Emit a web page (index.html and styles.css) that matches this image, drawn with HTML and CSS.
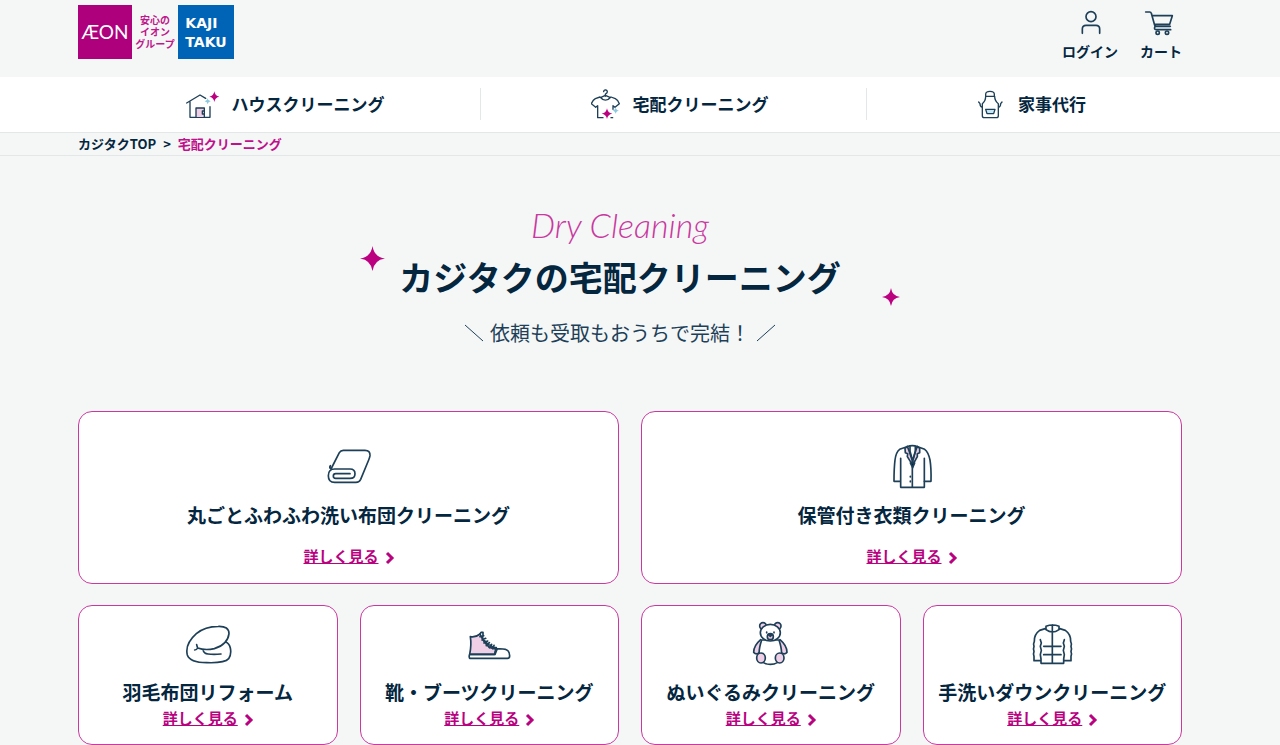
FILE: index.html
```
<!DOCTYPE html>
<html lang="ja">
  <head>
    <meta charset="utf-8">
    <title>宅配クリーニング | カジタク</title>
    <meta name="viewport" content="initial-scale=1, width=device-width">
    <link rel="stylesheet" href="styles.css">
  </head>
  <body>
    <header class="header wrap">
      <a class="logo" href="#">
        <span class="logo-aeon">ÆON</span>
        <span class="logo-group">安心の<br>イオン<br>グループ</span>
        <span class="logo-kajitaku">KAJI<br>TAKU</span>
      </a>
      <div class="tools">
        <a class="tool" href="#">
          <svg class="line" viewBox="0 0 84 84" aria-hidden="true">
            <circle cx="45" cy="23" r="15" />
            <path d="M19 73V60q0-11 11-11h30q11 0 11 11v13" />
          </svg>
          ログイン
        </a>
        <a class="tool" href="#">
          <svg class="line" viewBox="0 0 84 84" aria-hidden="true">
            <path d="M-4 9h12q4 0 5 4l10 36q1 3 5 3h42M16 20h60l-8 26H24M24 52q-4 10 3 10h44" />
            <circle cx="32" cy="71" r="5" />
            <circle cx="60" cy="71" r="5" />
          </svg>
          カート
        </a>
      </div>
    </header>

    <nav class="nav">
      <div class="nav-inner wrap">
        <a class="nav-item" href="#">
          <svg class="nav-icon nav-icon-house" viewBox="42 24 102 96" aria-hidden="true">
            <path d="M44 69l40-24 17 10M54 66v46h60V80" />
            <path class="pink" d="M72 111V84h25v27M97 93h-6v9h6" />
            <path class="blue" d="M107 55q1 8 9 9q-8 1-9 9q-1-8-9-9q8-1 9-9z" />
            <path class="star" d="M127 34q2 14 15 16q-13 2-15 16q-2-14-15-16q13-2 15-16z" />
          </svg>
          ハウスクリーニング
        </a>
        <a class="nav-item" href="#">
          <svg class="nav-icon nav-icon-shirt" viewBox="30 24 90 96" aria-hidden="true">
            <path d="M68 35q1-6 6-5q7 2 4 8l-5 5v6M60 52l13-6 14 6M57 51q16 19 33 0l13 5q8 4 12 15l-13 11-6-5v11M57 51l-14 5q-7 4-12 15l13 11 6-5v36h16M90 113h5" />
            <path class="blue" d="M104 82q1 9 10 10q-9 1-10 10q-1-9-10-10q9-1 10-10z" />
            <path class="star" d="M78 85q2 14 16 16q-14 2-16 16q-2-14-16-16q14-2 16-16z" />
          </svg>
          宅配クリーニング
        </a>
        <a class="nav-item" href="#">
          <svg class="nav-icon nav-icon-apron" viewBox="54 24 84 96" aria-hidden="true">
            <path d="M77 49h27M77 49V43q0-9 13-9t13 9v6M77 49q0 14-10 22v36q0 6 6 6h36q6 0 6-6V71q-11-8-11-22M67 82q-7-2-7-11l-4-5M115 82q7-2 7-11l4-5M67 72v11M115 72v11" />
            <path class="sky" d="M77 88h28l-4 13H81z" />
          </svg>
          家事代行
        </a>
      </div>
    </nav>

    <div class="breadcrumb">
      <div class="breadcrumb-inner wrap">
        <a href="#">カジタクTOP</a>
        <span>&gt;</span>
        <span class="current">宅配クリーニング</span>
      </div>
    </div>

    <main class="wrap">
      <div class="hero">
        <p class="hero-en">Dry Cleaning</p>
        <h1 class="hero-title">カジタクの宅配クリーニング</h1>
        <p class="hero-sub">
          <svg viewBox="0 0 18 18" aria-hidden="true"><path d="M0 1l18 16" /></svg>
          依頼も受取もおうちで完結！
          <svg viewBox="0 0 18 18" aria-hidden="true"><path d="M0 17L18 1" /></svg>
        </p>
        <svg class="sparkle sparkle-left" viewBox="0 0 24 24" aria-hidden="true"><path d="M12 0q1.500 10.500 12 12q-10.500 1.500-12 12q-1.500-10.500-12-12q10.500-1.500 12-12z" /></svg>
        <svg class="sparkle sparkle-right" viewBox="0 0 24 24" aria-hidden="true"><path d="M12 0q1.500 10.500 12 12q-10.500 1.500-12 12q-1.500-10.500-12-12q10.500-1.500 12-12z" /></svg>
      </div>

      <div class="cards">
        <section class="card card-large">
          <svg class="card-icon" viewBox="15 24 144 144" aria-hidden="true">
            <path d="M33 102L58 53q4-7 12-7h65q16 0 15 16q-1 6-4 13l-24 58q-4 9-14 9H44q-19 0-19-20t19-20h46q15 0 15 14t-15 14H47q-7 0-7-7t7-7h43M33 102q-6-4-2-10" />
          </svg>
          <h2>丸ごとふわふわ洗い布団クリーニング</h2>
          <a class="more" href="#"><span>詳しく見る</span><svg viewBox="0 0 8 12" aria-hidden="true"><path d="M1 1l5 5-5 5" /></svg></a>
        </section>
        <section class="card card-large">
          <svg class="card-icon" viewBox="22 24 144 144" aria-hidden="true">
            <path d="M79 35q16-6 32 0l21 8q11 8 16 32 4 25 3 64h-21M79 35l-22 8q-11 8-14 32-3 25-3 64h20M60 70v87h71V70M95 96v61" />
            <path class="pink" d="M80 34l-7 6 1 13 7 3-1 9 15 24V77L85 47zM110 34l7 6v13l-7 3v9L96 90V77l9-30z" />
            <path d="M88 35v14l8 28 8-28V35M89 124v2M89 138v2" />
            <path class="navy" d="M89 84h13l-6 14z" />
          </svg>
          <h2>保管付き衣類クリーニング</h2>
          <a class="more" href="#"><span>詳しく見る</span><svg viewBox="0 0 8 12" aria-hidden="true"><path d="M1 1l5 5-5 5" /></svg></a>
        </section>
        <section class="card">
          <svg class="card-icon" viewBox="342 75 144 144" aria-hidden="true">
            <path d="M380 149q1 5 3 10-3 6-9 6M383 159q22 8 50 2 40-12 44-45 0-23-32-22-40 0-66 22-35 31-27 64 8 23 58 23 54 2 66-12 9-13 5-32-3-14-14-18M399 165q3 11 15 12 17 2 39 0" />
          </svg>
          <h2>羽毛布団リフォーム</h2>
          <a class="more" href="#"><span>詳しく見る</span><svg viewBox="0 0 8 12" aria-hidden="true"><path d="M1 1l5 5-5 5" /></svg></a>
        </section>
        <section class="card">
          <svg class="card-icon" viewBox="16 15 144 144" aria-hidden="true">
            <path class="pink" d="M30 118q6-29 2-53 16 3 29-8 11 26 28 40l23 6-6 15z" />
            <path d="M30 118q-3 6 0 12h113q7 0 7-8 0-19-20-20l-20-1q-5 7-5 17zM61 57l3-5h6v13M61 65l11-3M67 75l11-5M73 84l11-6M80 92l9-9M89 98l7-10M99 101l4-10M67 65l4 11 9 4 3 9 10 1 6 7 11 1" />
          </svg>
          <h2>靴・ブーツクリーニング</h2>
          <a class="more" href="#"><span>詳しく見る</span><svg viewBox="0 0 8 12" aria-hidden="true"><path d="M1 1l5 5-5 5" /></svg></a>
        </section>
        <section class="card">
          <svg class="card-icon" viewBox="20 24 144 144" aria-hidden="true">
            <circle class="pink" cx="68" cy="42" r="10" />
            <circle class="pink" cx="112" cy="42" r="10" />
            <path class="pink" d="M61 83q-21 18-21 38 8 9 18 0M119 83q21 18 21 38-8 9-18 0" />
            <path class="white" d="M64 84q-24 73 26 73t26-73z" />
            <ellipse class="white" cx="90" cy="62" rx="30" ry="25" />
            <ellipse class="pink" cx="62" cy="138" rx="13" ry="15" />
            <ellipse class="pink" cx="118" cy="138" rx="13" ry="15" />
            <circle class="pink" cx="90" cy="74" r="9" />
            <path class="navy" d="M84 68h12l-6 5zM79 60v2M101 60v2" />
          </svg>
          <h2>ぬいぐるみクリーニング</h2>
          <a class="more" href="#"><span>詳しく見る</span><svg viewBox="0 0 8 12" aria-hidden="true"><path d="M1 1l5 5-5 5" /></svg></a>
        </section>
        <section class="card">
          <svg class="card-icon" viewBox="25 24 144 144" aria-hidden="true">
            <path d="M79 43q20-8 39 0v10q-20 14-39 0zM98 39v115M79 49l-19 6q-17 12-16 33-4 8-1 15-3 8 0 15-3 8 0 15v13h19M118 49l19 6q17 12 16 33 4 8 1 15 3 8 0 15 3 8 0 15v13h-19M62 83l3 10-3 10 3 12-3 13 2 13v13h68v-13l2-13-3-13 3-12-3-10 3-10M72 103h52M72 128h52" />
          </svg>
          <h2>手洗いダウンクリーニング</h2>
          <a class="more" href="#"><span>詳しく見る</span><svg viewBox="0 0 8 12" aria-hidden="true"><path d="M1 1l5 5-5 5" /></svg></a>
        </section>
      </div>
    </main>
  </body>
</html>
```
FILE: styles.css
```
* {box-sizing:border-box;}
body {margin:0; background:#f5f7f7; color:#04263e; font-family:"Noto Sans CJK JP",sans-serif; font-weight:700;}
a {color:inherit; text-decoration:none;}
h1, h2, p {margin:0;}
svg {display:block; fill:none; stroke:#1d3f57; stroke-width:5; stroke-linecap:round; stroke-linejoin:round;}
.wrap {padding-left:78px; padding-right:98px;}

.pink {fill:#efcfe6;}
.white {fill:#fff;}
.navy {fill:#04263e;}
.sky {fill:#c5e7f5;}
.blue {fill:#8cc8e0; stroke:none;}
.star {fill:#bb0080; stroke:none;}

/* header */
.header {display:flex; justify-content:space-between; height:77px; padding-top:5px;}
.logo {display:flex; height:54px;}
.logo-aeon, .logo-kajitaku {display:flex; align-items:center; justify-content:center; color:#fff;}
.logo-aeon {width:54px; background:#ae007d; font:400 19px/24px Lato,sans-serif;}
.logo-group {width:46px; padding-top:9px; color:#c0178b; font-size:10px; line-height:12px; text-align:center; white-space:nowrap;}
.logo-kajitaku {width:56px; padding-top:2px; background:#0064b6; font:700 14px/19px "DejaVu Sans",sans-serif;}
.tools {display:flex; gap:22px;}
.tool {display:flex; flex-direction:column; align-items:center; padding-top:4px; font-size:14px; line-height:20px;}
.tool svg {width:28px; height:28px; margin-bottom:4px; overflow:visible;}

/* global nav */
.nav {background:#fff; border-bottom:1px solid #e3e7e8;}
.nav-inner {display:grid; grid-template-columns:403fr 386fr 315fr; padding-top:11px; padding-bottom:12px;}
.nav-item {display:flex; align-items:center; justify-content:center; gap:12px; padding-left:12px; border-right:1px solid #e3e7e8; font-size:17px; line-height:24px; white-space:nowrap;}
.nav-item:last-child {padding-left:15px; border-right:0;}
.nav-icon {height:32px; stroke-width:4;}
.nav-icon-house {width:34px;}
.nav-icon-shirt {width:30px;}
.nav-icon-apron {width:28px;}

.breadcrumb {border-bottom:1px solid #e3e7e8; font-size:13px; line-height:22px;}
.breadcrumb-inner {display:flex; gap:7px;}
.current {color:#c0108b;}

/* hero */
.hero {position:relative; max-width:540px; margin:0 auto; padding:49px 20px 63px 0; text-align:center;}
.hero-en {color:#c9399f; font:italic 300 34px/40px Lato,cursive;}
.hero-title {margin-top:7px; font-size:34px; line-height:50px; white-space:nowrap;}
.hero-sub {display:flex; align-items:center; justify-content:center; gap:7px; margin-top:16px; color:#1d3f57; font-size:20px; font-weight:400; line-height:30px; white-space:nowrap;}
.hero-sub svg {width:18px; height:18px; stroke-width:1;}
.sparkle {position:absolute; fill:#bb0080; stroke:none;}
.sparkle-left {top:90px; left:0; width:25px; height:25px;}
.sparkle-right {top:132px; right:0; width:18px; height:18px;}

/* service cards */
.cards {display:grid; grid-template-columns:repeat(4,1fr); gap:21px 22px;}
.card {display:flex; flex-direction:column; align-items:center; padding:14px 0 16px; background:#fff; border:1px solid #c9399f; border-radius:14px;}
.card-large {grid-column:span 2; padding:31px 0 17px;}
.card-icon {width:48px; height:48px;}
.card h2 {margin:10px 0 2px; font-size:19px; line-height:28px; white-space:nowrap;}
.card-large h2 {margin-bottom:17px;}
.more {display:flex; align-items:center; gap:7px; color:#b9027f; font-size:15px; line-height:20px;}
.more span {text-decoration:underline;}
.more svg {width:8px; height:12px; margin-top:4px; stroke:#b9027f; stroke-width:3; stroke-linecap:butt; stroke-linejoin:miter; overflow:visible;}
```
